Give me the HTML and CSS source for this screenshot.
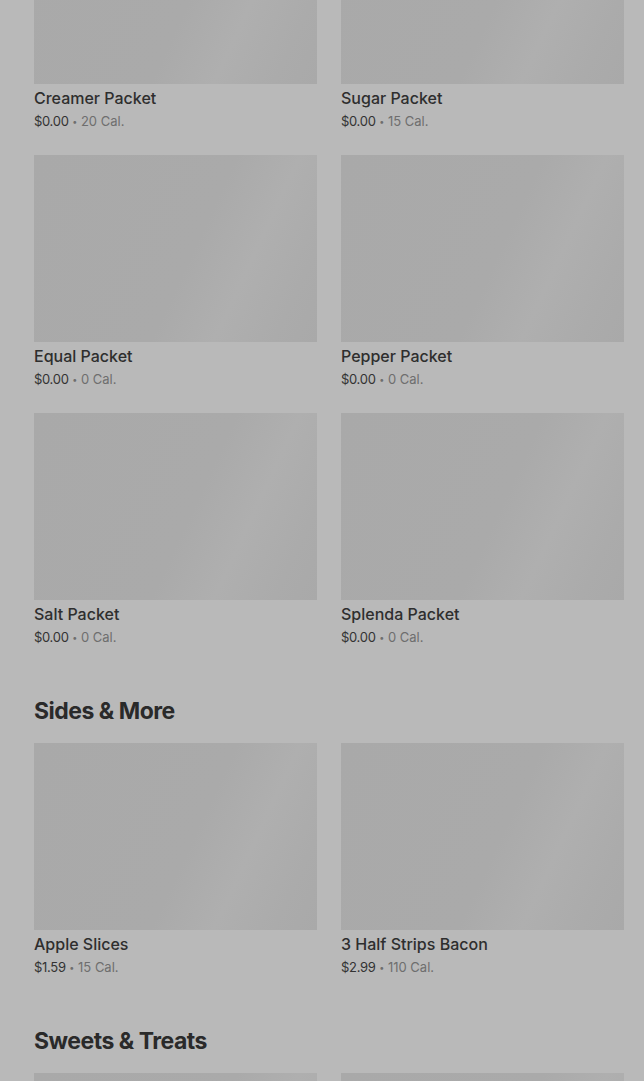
FILE: index.html
```html
<!DOCTYPE html>
<html lang="en">
<head>
    <meta charset="UTF-8">
    <meta name="viewport" content="width=device-width, initial-scale=1.0">
    <title>Menu</title>
    <link rel="stylesheet" href="styles.css">
</head>
<body>
    <div class="menu">
        <div class="grid">
            <div class="item">
                <div class="thumb"></div>
                <div class="name">Creamer Packet</div>
                <div class="meta"><span class="price">$0.00</span> <span class="dot">•</span> <span class="cal">20 Cal.</span></div>
            </div>
            <div class="item">
                <div class="thumb"></div>
                <div class="name">Sugar Packet</div>
                <div class="meta"><span class="price">$0.00</span> <span class="dot">•</span> <span class="cal">15 Cal.</span></div>
            </div>
            <div class="item">
                <div class="thumb"></div>
                <div class="name">Equal Packet</div>
                <div class="meta"><span class="price">$0.00</span> <span class="dot">•</span> <span class="cal">0 Cal.</span></div>
            </div>
            <div class="item">
                <div class="thumb"></div>
                <div class="name">Pepper Packet</div>
                <div class="meta"><span class="price">$0.00</span> <span class="dot">•</span> <span class="cal">0 Cal.</span></div>
            </div>
            <div class="item">
                <div class="thumb"></div>
                <div class="name">Salt Packet</div>
                <div class="meta"><span class="price">$0.00</span> <span class="dot">•</span> <span class="cal">0 Cal.</span></div>
            </div>
            <div class="item">
                <div class="thumb"></div>
                <div class="name">Splenda Packet</div>
                <div class="meta"><span class="price">$0.00</span> <span class="dot">•</span> <span class="cal">0 Cal.</span></div>
            </div>
        </div>

        <h2 class="section-title">Sides &amp; More</h2>
        <div class="grid">
            <div class="item">
                <div class="thumb"></div>
                <div class="name">Apple Slices</div>
                <div class="meta"><span class="price">$1.59</span> <span class="dot">•</span> <span class="cal">15 Cal.</span></div>
            </div>
            <div class="item">
                <div class="thumb"></div>
                <div class="name">3 Half Strips Bacon</div>
                <div class="meta"><span class="price">$2.99</span> <span class="dot">•</span> <span class="cal">110 Cal.</span></div>
            </div>
        </div>

        <h2 class="section-title">Sweets &amp; Treats</h2>
        <div class="grid">
            <div class="item">
                <div class="thumb"></div>
            </div>
            <div class="item">
                <div class="thumb"></div>
            </div>
        </div>
    </div>
</body>
</html>
```
FILE: styles.css
```css
body {
    font-family: 'Inter', 'Roboto', sans-serif;
    background-color: #b9b9b9;
    margin: 0;
    overflow: hidden;
}
.menu {
    margin-top: -103px;
    padding: 0 20px 0 34px;
}
.grid {
    display: grid;
    grid-template-columns: 283px 283px;
    column-gap: 24px;
    row-gap: 25px;
}
.thumb {
    height: 187px;
    background: linear-gradient(115deg, #a9a9a9 0%, #aaaaaa 55%, #afafaf 72%, #ababab 88%, #a9a9a9 100%);
}
.name {
    margin-top: 4px;
    font-size: 16px;
    line-height: 20px;
    font-weight: 500;
    color: #2e2e2e;
}
.meta {
    margin-top: 4px;
    height: 18px;
    font-size: 13px;
    line-height: 18px;
    color: #6e6e6e;
}
.price {
    color: #333;
    letter-spacing: -0.3px;
}
.dot {
    display: inline-block;
    font-size: 9px;
    line-height: 10px;
    vertical-align: 1px;
}
.section-title {
    margin: 49px 0 16px;
    font-size: 23px;
    line-height: 32px;
    font-weight: 700;
    letter-spacing: -0.5px;
    color: #2a2a2a;
}
```
